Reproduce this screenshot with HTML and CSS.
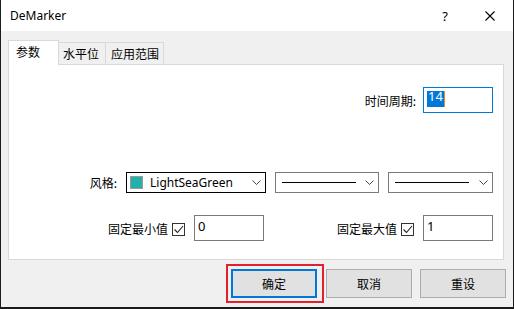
FILE: index.html
```html
<!DOCTYPE html>
<html>
<head>
<meta charset="utf-8">
<link rel="stylesheet" href="styles.css">
</head>
<body>
<div class="window">
  <div class="titlebar">
    <span class="title">DeMarker</span>
    <span class="tbtn help">?</span>
    <span class="tbtn">
      <svg class="close" width="10" height="10" viewBox="0 0 10 10"><path d="M0.5 0.5 L9.5 9.5 M9.5 0.5 L0.5 9.5" stroke="#000" stroke-width="1.1" fill="none"/></svg>
    </span>
  </div>
  <div class="body">
    <div class="tabs">
      <div class="tab active">参数</div>
      <div class="tab second">水平位</div>
      <div class="tab third">应用范围</div>
    </div>
    <div class="panel">
      <div class="row row-period">
        <span class="label">时间周期:</span>
        <div class="input focus"><span class="sel">14</span><span class="caret"></span></div>
      </div>
      <div class="row row-style">
        <span class="label">风格:</span>
        <div class="combo combo-color">
          <span class="swatch"></span>
          <span class="combo-text">LightSeaGreen</span>
          <svg class="chev" width="9" height="5" viewBox="0 0 9 5"><path d="M0.5 0.5 L4.5 4.5 L8.5 0.5" stroke="#444" fill="none"/></svg>
        </div>
        <div class="combo combo-line">
          <span class="line"></span>
          <svg class="chev" width="9" height="5" viewBox="0 0 9 5"><path d="M0.5 0.5 L4.5 4.5 L8.5 0.5" stroke="#444" fill="none"/></svg>
        </div>
        <div class="combo combo-line">
          <span class="line"></span>
          <svg class="chev" width="9" height="5" viewBox="0 0 9 5"><path d="M0.5 0.5 L4.5 4.5 L8.5 0.5" stroke="#444" fill="none"/></svg>
        </div>
      </div>
      <div class="row row-fixed">
        <div class="group group-min">
          <span class="label">固定最小值</span>
          <span class="check"><svg width="11" height="11" viewBox="0 0 11 11"><path d="M1.5 5.5 L4.5 8.5 L10 2" stroke="#222" stroke-width="1.1" fill="none"/></svg></span>
          <div class="input">0</div>
        </div>
        <div class="group">
          <span class="label">固定最大值</span>
          <span class="check"><svg width="11" height="11" viewBox="0 0 11 11"><path d="M1.5 5.5 L4.5 8.5 L10 2" stroke="#222" stroke-width="1.1" fill="none"/></svg></span>
          <div class="input">1</div>
        </div>
      </div>
    </div>
    <div class="buttons">
      <div class="btn default">确定<span class="mark"></span></div>
      <div class="btn">取消</div>
      <div class="btn">重设</div>
    </div>
  </div>
</div>
</body>
</html>
```
FILE: styles.css
```css
* { box-sizing: border-box; }

body {
  margin: 0;
  width: 514px;
  height: 309px;
  overflow: hidden;
  background: #1c1c1c;
  font-family: "Noto Sans", "Noto Sans CJK SC", sans-serif;
  font-size: 12px;
  color: #000;
}

.window {
  margin-left: 1px;
  width: 512px;
  height: 307px;
  background: #f0f0f0;
  display: flex;
  flex-direction: column;
}

.titlebar {
  height: 31px;
  background: #fff;
  display: flex;
  align-items: center;
}

.title {
  flex: 1;
  padding-left: 9px;
  font-size: 12px;
}

.tbtn {
  width: 46px;
  height: 31px;
  display: flex;
  align-items: center;
  justify-content: center;
}

.help {
  font-size: 13px;
  padding-left: 2px;
}

.body {
  flex: 1;
  padding: 9px 9px 0 7px;
  display: flex;
  flex-direction: column;
}

.tabs {
  height: 24px;
  display: flex;
  align-items: flex-end;
}

.tab {
  height: 22px;
  border: 1px solid #d9d9d9;
  border-bottom: none;
  line-height: 16px;
  padding-top: 3px;
  background: #f0f0f0;
  font-family: "Noto Sans CJK SC", sans-serif;
}

.tab.active {
  width: 51px;
  height: 25px;
  margin-bottom: -1px;
  padding-left: 7px;
  background: #fff;
  position: relative;
  z-index: 1;
}

.tab.second {
  width: 47px;
  border-left: none;
  padding-left: 4px;
}

.tab.third {
  width: 58px;
  border-left: none;
  padding-left: 5px;
}

.panel {
  width: 496px;
  height: 196px;
  background: #fff;
  border: 1px solid #d9d9d9;
  padding-right: 10px;
  display: flex;
  flex-direction: column;
}

.row {
  display: flex;
  justify-content: flex-end;
  align-items: center;
}

.label {
  font-family: "Noto Sans CJK SC", sans-serif;
  white-space: nowrap;
}

.row-period {
  margin-top: 22px;
}

.row-period .label {
  margin-right: 7px;
}

.input {
  width: 70px;
  height: 26px;
  border: 1px solid #7a7a7a;
  background: #fff;
  padding: 2px 3px;
  font-size: 13px;
  line-height: 16px;
  display: flex;
  align-items: flex-start;
}

.input.focus {
  border-color: #0078d7;
  padding-top: 3px;
}

.sel {
  display: inline-block;
  height: 16px;
  line-height: 11px;
  background: #0078d7;
  color: #fff;
  padding: 0 1px;
  font-size: 13px;
}

.caret {
  display: inline-block;
  width: 1px;
  height: 16px;
  background: #e08a3c;
}

.row-style {
  margin-top: 59px;
  gap: 9px;
}

.combo {
  height: 21px;
  border: 1px solid #7a7a7a;
  background: #fff;
  display: flex;
  align-items: center;
  padding-right: 4px;
}

.combo-color {
  width: 140px;
  border-color: #000;
  padding-left: 3px;
}

.swatch {
  width: 13px;
  height: 13px;
  background: #20b2aa;
  border: 1px solid #9a9a9a;
  flex-shrink: 0;
}

.combo-text {
  flex: 1;
  margin-left: 7px;
  font-size: 12px;
}

.combo-line {
  width: 104px;
  padding-left: 6px;
}

.combo-line:last-child {
  width: 105px;
}

.line {
  width: 74px;
  height: 1px;
  background: #000;
  margin-right: auto;
}

.chev {
  flex-shrink: 0;
}

.row-fixed {
  margin-top: 22px;
}

.group {
  display: flex;
  align-items: center;
}

.group-min {
  margin-right: 73px;
}

.check {
  width: 13px;
  height: 13px;
  border: 1px solid #333;
  margin: 2px 9px 0 4px;
  display: flex;
  align-items: center;
  justify-content: center;
}

.buttons {
  margin-top: 9px;
  margin-right: -2px;
  display: flex;
  justify-content: flex-end;
  gap: 8px;
}

.btn {
  width: 86px;
  height: 29px;
  border: 1px solid #adadad;
  background: #e1e1e1;
  display: flex;
  align-items: center;
  justify-content: center;
  font-family: "Noto Sans CJK SC", sans-serif;
  font-size: 12px;
}

.btn.default {
  border: 2px solid #0078d7;
  position: relative;
  margin-right: 1px;
}

.mark {
  position: absolute;
  top: -7px;
  left: -7px;
  right: -9px;
  bottom: -7px;
  border: 2px solid #e3202b;
}
```
